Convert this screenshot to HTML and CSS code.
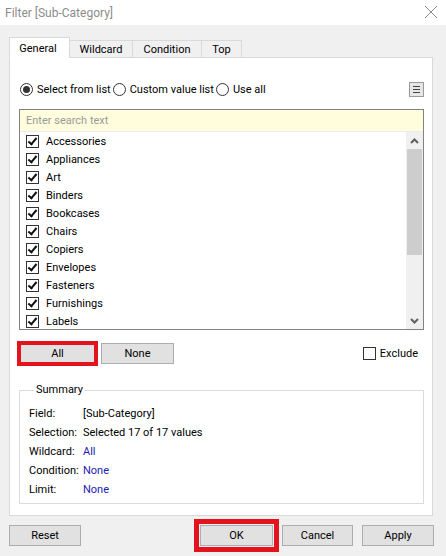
FILE: index.html
```html
<html>
    <head>
        <title>Filter [Sub-Category]</title>
        <link rel="stylesheet" href="styles.css">
    </head>
    <body>
        <div class = 'dialog'>
            <div class = 'titlebar'>
                <span class = 'title'>Filter [Sub-Category]</span>
                <svg class = 'close' width="14" height="14" viewBox="0 0 14 14">
                    <path d="M1 1L13 13M13 1L1 13" stroke="#8a8a8a" stroke-width="1" fill="none"/>
                </svg>
            </div>

            <div class = 'tabs'>
                <div class = 'tab selected t-general'>General</div>
                <div class = 'tab t-wildcard'>Wildcard</div>
                <div class = 'tab t-condition'>Condition</div>
                <div class = 'tab t-top'>Top</div>
            </div>

            <div class = 'panel'>
                <div class = 'mode-row'>
                    <label class = 'radio'><span class = 'radio-dot on'></span>Select from list</label>
                    <label class = 'radio'><span class = 'radio-dot'></span>Custom value list</label>
                    <label class = 'radio'><span class = 'radio-dot'></span>Use all</label>
                    <span class = 'menu-btn'><span></span><span></span><span></span></span>
                </div>

                <div class = 'listbox'>
                    <div class = 'search'>Enter search text</div>
                    <div class = 'list-body'>
                        <div class = 'items'>
                            <div class = 'item'><span class = 'check on'></span>Accessories</div>
                            <div class = 'item'><span class = 'check on'></span>Appliances</div>
                            <div class = 'item'><span class = 'check on'></span>Art</div>
                            <div class = 'item'><span class = 'check on'></span>Binders</div>
                            <div class = 'item'><span class = 'check on'></span>Bookcases</div>
                            <div class = 'item'><span class = 'check on'></span>Chairs</div>
                            <div class = 'item'><span class = 'check on'></span>Copiers</div>
                            <div class = 'item'><span class = 'check on'></span>Envelopes</div>
                            <div class = 'item'><span class = 'check on'></span>Fasteners</div>
                            <div class = 'item'><span class = 'check on'></span>Furnishings</div>
                            <div class = 'item'><span class = 'check on'></span>Labels</div>
                        </div>
                        <div class = 'scrollbar'>
                            <div class = 'arrow'>
                                <svg width="9" height="6" viewBox="0 0 9 6"><path d="M1 5L4.5 1.5L8 5" stroke="#606060" stroke-width="2" fill="none"/></svg>
                            </div>
                            <div class = 'track'><div class = 'thumb'></div></div>
                            <div class = 'arrow'>
                                <svg width="9" height="6" viewBox="0 0 9 6"><path d="M1 1L4.5 4.5L8 1" stroke="#606060" stroke-width="2" fill="none"/></svg>
                            </div>
                        </div>
                    </div>
                </div>

                <div class = 'select-row'>
                    <button class = 'btn all marked'>All</button>
                    <button class = 'btn none'>None</button>
                    <label class = 'exclude'><span class = 'check'></span>Exclude</label>
                </div>

                <fieldset class = 'summary'>
                    <legend>Summary</legend>
                    <div class = 'sum-row'><span class = 'sum-key'>Field:</span><span>[Sub-Category]</span></div>
                    <div class = 'sum-row'><span class = 'sum-key'>Selection:</span><span>Selected 17 of 17 values</span></div>
                    <div class = 'sum-row'><span class = 'sum-key'>Wildcard:</span><span class = 'link'>All</span></div>
                    <div class = 'sum-row'><span class = 'sum-key'>Condition:</span><span class = 'link'>None</span></div>
                    <div class = 'sum-row'><span class = 'sum-key'>Limit:</span><span class = 'link'>None</span></div>
                </fieldset>
            </div>

            <div class = 'footer'>
                <button class = 'btn reset'>Reset</button>
                <button class = 'btn ok marked-big'>OK</button>
                <button class = 'btn cancel'>Cancel</button>
                <button class = 'btn apply'>Apply</button>
            </div>
        </div>
    </body>
</html>
```

FILE: styles.css
```css
body {
    margin: 0;
    font-family: Roboto, "Open Sans", sans-serif;
    font-size: 11px;
    color: #000;
    background: #f0f0f0;
}
.dialog {
    width: 446px;
    height: 556px;
    display: flex;
    flex-direction: column;
    background: #f0f0f0;
    overflow: hidden;
}
.titlebar {
    height: 25px;
    background: #fff;
    display: flex;
    align-items: center;
    justify-content: space-between;
    padding: 0 8px 0 5px;
}
.title {
    color: #8c8c8c;
    font-size: 12px;
}
.close {
    margin-top: -2px;
}

/* tabs */
.tabs {
    display: flex;
    align-items: flex-end;
    height: 21px;
    margin: 12px 0 0 9px;
}
.tab {
    height: 18px;
    box-sizing: border-box;
    border: 1px solid #d9d9d9;
    border-bottom: none;
    border-left: none;
    line-height: 17px;
    text-align: center;
    background: #f0f0f0;
}
.tab.selected {
    position: relative;
    z-index: 1;
    height: 21px;
    background: #fff;
    border-left: 1px solid #d9d9d9;
    border-bottom: 1px solid #fff;
    line-height: 21px;
    padding-right: 3px;
}
.t-general { width: 61px; }
.t-wildcard { width: 63px; }
.t-condition { width: 69px; }
.t-top { width: 40px; }

.panel {
    margin: -1px 13px 0 9px;
    height: 459px;
    box-sizing: border-box;
    border: 1px solid #d9d9d9;
    background: #fff;
    padding: 0 8px 0 9px;
    display: flex;
    flex-direction: column;
}

/* radio row */
.mode-row {
    display: flex;
    align-items: center;
    height: 16px;
    margin-top: 23px;
}
.radio {
    display: flex;
    align-items: center;
    margin-right: 1px;
}
.radio-dot {
    width: 11px;
    height: 11px;
    border: 1px solid #333;
    border-radius: 50%;
    margin: 0 4px 0 1px;
    position: relative;
}
.radio-dot.on::after {
    content: "";
    position: absolute;
    left: 2px;
    top: 2px;
    width: 7px;
    height: 7px;
    border-radius: 50%;
    background: #333;
}
.menu-btn {
    margin-left: auto;
    width: 15px;
    height: 15px;
    box-sizing: border-box;
    border: 1px solid #9a9a9a;
    background: #e6e6e6;
    display: flex;
    flex-direction: column;
    justify-content: center;
    align-items: center;
    gap: 2px;
}
.menu-btn span {
    width: 7px;
    height: 1px;
    background: #444;
}

/* list */
.listbox {
    margin-top: 12px;
    height: 221px;
    box-sizing: border-box;
    border: 1px solid #828282;
    display: flex;
    flex-direction: column;
}
.search {
    height: 21px;
    background: #fffddc;
    border-bottom: 1px solid #ececec;
    color: #9a9a9a;
    padding-left: 6px;
    line-height: 21px;
}
.list-body {
    flex: 1;
    display: flex;
    overflow: hidden;
}
.items {
    flex: 1;
    overflow: hidden;
}
.item {
    height: 18px;
    display: flex;
    align-items: center;
    padding-left: 6px;
    padding-top: 1px;
    box-sizing: border-box;
}
.check {
    flex: none;
    width: 13px;
    height: 13px;
    box-sizing: border-box;
    border: 1px solid #333;
    margin-right: 7px;
    position: relative;
}
.check.on::after {
    content: "";
    position: absolute;
    left: 3px;
    top: 0px;
    width: 3px;
    height: 7px;
    border: solid #111;
    border-width: 0 2px 2px 0;
    transform: rotate(40deg);
}
.scrollbar {
    width: 17px;
    background: #f0f0f0;
    display: flex;
    flex-direction: column;
}
.arrow {
    height: 17px;
    display: flex;
    align-items: center;
    justify-content: center;
}
.track {
    flex: 1;
}
.thumb {
    height: 106px;
    margin: 0 1px;
    background: #cdcdcd;
}

/* buttons */
.btn {
    font-family: inherit;
    font-size: 11px;
    color: #000;
    height: 21px;
    box-sizing: border-box;
    border: 1px solid #adadad;
    background: #e1e1e1;
    padding: 0;
    margin: 0;
}
.marked {
    outline: 4px solid #e3121c;
    outline-offset: -2px;
}
.marked-big {
    outline: 5px solid #e3121c;
    outline-offset: 1px;
}
.select-row {
    display: flex;
    align-items: center;
    margin-top: 13px;
}
.all {
    width: 77px;
}
.none {
    width: 73px;
    margin-left: 5px;
}
.exclude {
    margin-left: auto;
    margin-right: 6px;
    display: flex;
    align-items: center;
}
.exclude .check {
    margin-right: 4px;
}

/* summary */
.summary {
    margin: 19px 0 0 0;
    border: 1px solid #dcdcdc;
    padding: 7px 0 4px 9px;
}
.summary legend {
    padding: 0 2px;
    margin-left: 5px;
    line-height: 14px;
}
.sum-row {
    height: 19px;
    display: flex;
    align-items: center;
    white-space: nowrap;
}
.sum-key {
    flex: none;
    width: 54px;
}
.link {
    color: #1c1cb0;
}

/* footer */
.footer {
    display: flex;
    margin-top: 9px;
    padding: 0 12px 0 9px;
}
.reset {
    width: 72px;
}
.ok {
    width: 73px;
    margin-left: auto;
}
.cancel {
    width: 71px;
    margin-left: 9px;
}
.apply {
    width: 72px;
    margin-left: 9px;
}
```
